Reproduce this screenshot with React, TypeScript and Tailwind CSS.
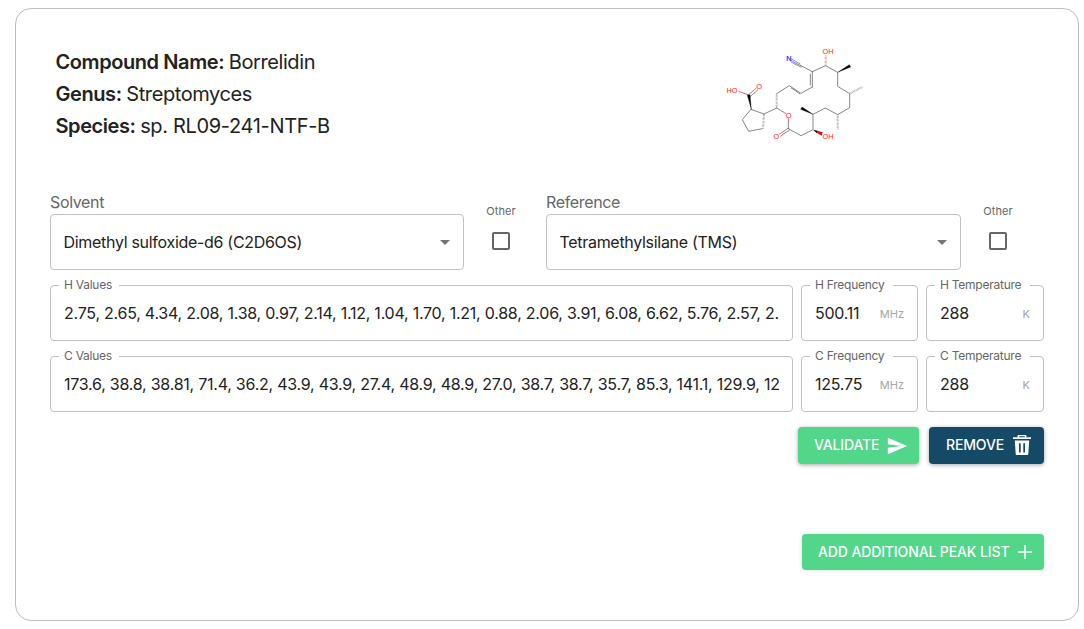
import React from "react";

const FONT = "font-['Inter','Liberation_Sans',sans-serif]";

function Molecule() {
  return (
    <svg width="160" height="115" viewBox="0 0 480 345" fill="none" aria-label="Borrelidin structure">
      <g stroke="#5a5a5a" strokeWidth="2.2" strokeLinecap="round">
        <path d="M108 223L82 254L101 289L142 281M147 237L108 223" />
        <path d="M147 237L185 219M185 176L223 152L258 175L292 156M229 159L254 176" />
        <path d="M292 156V110M286 150V118M292 110L332 92L368 112V154L404 176V218L368 239L331 219L294 238V284L258 302L220 281" />
        <path d="M292 110L258 92" />
        <path d="M101 180L85 174M99 181L114 168M104 186L120 172" />
        <path d="M185 219L203 230M220 281V259M219 280L206 289M223 286L208 295" />
      </g>
      <g stroke="#ff3333" strokeWidth="2.2">
        <path d="M85 174L70 169M114 168L124 159M119 173L129 164M203 230L213 236M220 259V248M206 289L192 298M208 295L196 304" />
      </g>
      <path d="M258 92L241 84M260 97L243 89M256 87L243 80" stroke="#555" strokeWidth="2" />
      <path d="M241 84L227 75M243 89L227 80M243 80L229 71" stroke="#4646ff" strokeWidth="2" />
      <g strokeWidth="6" strokeDasharray="1.6 2.6">
        <path d="M185 176V219M147 237L144 280M404 176L442 156M368 239V283" stroke="#888" />
        <path d="M332 92V76" stroke="#888" />
        <path d="M332 76V62" stroke="#f55" />
      </g>
      <path d="M109 223L97 181L105 179ZM368 112L403 89L407 96ZM294 238L257 223L261 216Z" fill="#000" stroke="#000" strokeWidth="1" />
      <path d="M294 284L308 287L306 295Z" fill="#000" />
      <path d="M307 287L323 292L320 302L306 294Z" fill="#f00" />
      <g className="font-['Liberation_Sans',sans-serif]" fontSize="22" textAnchor="middle" fill="#ff2222">
        <text x="339" y="58">OH</text>
        <text x="51" y="175">HO</text>
        <text x="132" y="161">O</text>
        <text x="221" y="248">O</text>
        <text x="184" y="312">O</text>
        <text x="339" y="312">OH</text>
        <text x="222" y="79" fill="#2222ff" stroke="#2222ff" strokeWidth="0.6">N</text>
      </g>
    </svg>
  );
}

function Select({ label, value, width }: { label: string; value: string; width: string }) {
  return (
    <div className={width}>
      <div className="h-[22px] text-base leading-[21px] tracking-[-0.35px] text-[#666]">{label}</div>
      <div className="flex h-14 items-center justify-between rounded border border-[#c0c0c0] pr-[13px] pl-[12.5px]">
        <span className="tracking-[-0.3px]">{value}</span>
        <svg width="10" height="5" viewBox="0 0 10 5" fill="#757575"><path d="M0 0h10L5 5z" /></svg>
      </div>
    </div>
  );
}

function Other() {
  return (
    <div className="flex w-[74px] flex-col items-center pt-[11px]">
      <span className="text-[11px] leading-4 tracking-[0.1px] text-[#666]">Other</span>
      <span className="mt-[13px] size-[18px] rounded-[2px] border-2 border-[#666]" />
    </div>
  );
}

function Field({ label, value, unit, width, legend }: { label: string; value: string; unit?: string; width: string; legend: string }) {
  return (
    <fieldset className={`h-[61px] min-w-0 rounded border border-[#c0c0c0] px-2 ${width}`}>
      <legend className={`h-[11px] px-[5px] text-xs leading-[9px] tracking-[-0.25px] whitespace-nowrap text-[#666] ${legend}`}>{label}</legend>
      <div className="flex h-[43px] items-center justify-between px-[5px]">
        <span className="whitespace-nowrap tracking-[-0.24px]">{value}</span>
        {unit && <span className="pt-[3px] text-[11px] text-[#a5a5a5]">{unit}</span>}
      </div>
    </fieldset>
  );
}

const BTN = "flex items-center rounded text-sm font-medium text-white";

export default function App() {
  return (
    <div className={`h-[629px] bg-white pt-2 pl-[15px] text-[#222] ${FONT}`}>
      <main className="h-[613px] w-[1064px] rounded-2xl border border-[#bdbdbd] px-[34px] pt-[26px]">
        <header className="flex h-[157px] items-start justify-between pr-[169px] pl-[5.5px]">
          <div className="pt-[11px] text-xl leading-8">
            <p><b className="font-semibold tracking-[-0.42px]">Compound Name: </b><span className="tracking-[-0.4px]">Borrelidin</span></p>
            <p><b className="font-semibold tracking-[-0.42px]">Genus: </b><span className="tracking-[-0.4px]">Streptomyces</span></p>
            <p><b className="font-semibold tracking-[-0.42px]">Species: </b><span className="tracking-[-0.34px]">sp. RL09-241-NTF-B</span></p>
          </div>
          <Molecule />
        </header>
        <section className="flex w-[994px] flex-col">
          <div className="flex">
            <Select label="Solvent" value="Dimethyl sulfoxide-d6 (C2D6OS)" width="w-[414px]" />
            <Other />
            <div className="w-2" />
            <Select label="Reference" value="Tetramethylsilane (TMS)" width="w-[415px]" />
            <Other />
          </div>
          <div className="mt-[10px] flex gap-2">
            <Field label="H Values" value="2.75, 2.65, 4.34, 2.08, 1.38, 0.97, 2.14, 1.12, 1.04, 1.70, 1.21, 0.88, 2.06, 3.91, 6.08, 6.62, 5.76, 2.57, 2." width="w-[743px]" legend="w-[60px]" />
            <Field label="H Frequency" value="500.11" unit="MHz" width="w-[117px]" legend="w-[83px]" />
            <Field label="H Temperature" value="288" unit="K" width="w-[118px]" legend="w-[95px]" />
          </div>
          <div className="mt-[10px] flex gap-2">
            <Field label="C Values" value="173.6, 38.8, 38.81, 71.4, 36.2, 43.9, 43.9, 27.4, 48.9, 48.9, 27.0, 38.7, 38.7, 35.7, 85.3, 141.1, 129.9, 12" width="w-[743px]" legend="w-[60px]" />
            <Field label="C Frequency" value="125.75" unit="MHz" width="w-[117px]" legend="w-[83px]" />
            <Field label="C Temperature" value="288" unit="K" width="w-[118px]" legend="w-[95px]" />
          </div>
          <div className="mt-[15px] flex justify-end gap-[10px]">
            <button className={`${BTN} h-[37px] w-[121px] justify-between bg-[#52d689] pr-[11px] pl-4 shadow-[0_1px_4px_rgba(0,0,0,.35)]`}>
              <span className="pb-px tracking-[-0.15px]">VALIDATE</span>
              <svg width="22" height="22" viewBox="0 0 24 24" fill="currentColor"><path d="M2.01 21L23 12 2.01 3 2 10l15 2-15 2z" /></svg>
            </button>
            <button className={`${BTN} h-[37px] w-[115px] justify-between bg-[#154a66] pr-[13px] pl-[17px] shadow-[0_1px_4px_rgba(0,0,0,.35)]`}>
              <span className="pb-px tracking-[-0.15px]">REMOVE</span>
              <svg className="mb-px" width="18" height="20" viewBox="0 0 18 20" fill="currentColor" fillRule="evenodd">
                <path d="M5.5 0h7a1 1 0 0 1 1 1v1.2H18v1.9H0V2.2h4.5V1a1 1 0 0 1 1-1zM6.2 1.3v.9h5.6v-.9z" />
                <path d="M1.8 5.5h14.4L15.3 19a1 1 0 0 1-1 1H3.7a1 1 0 0 1-1-1zM6 8.3v9.2h1.7V8.3zM10.3 8.3v9.2H12V8.3z" />
              </svg>
            </button>
          </div>
          <div className="mt-[70px] flex justify-end">
            <button className={`${BTN} h-9 w-[242px] justify-between bg-[#52d689] pr-3 pl-4 shadow-[0_0_4px_rgba(0,0,0,.15)]`}>
              <span className="tracking-[-0.12px]">ADD ADDITIONAL PEAK LIST</span>
              <svg width="14" height="14" viewBox="0 0 14 14" stroke="currentColor" strokeWidth="1.5"><path d="M7 0v14M0 7h14" /></svg>
            </button>
          </div>
        </section>
      </main>
    </div>
  );
}
